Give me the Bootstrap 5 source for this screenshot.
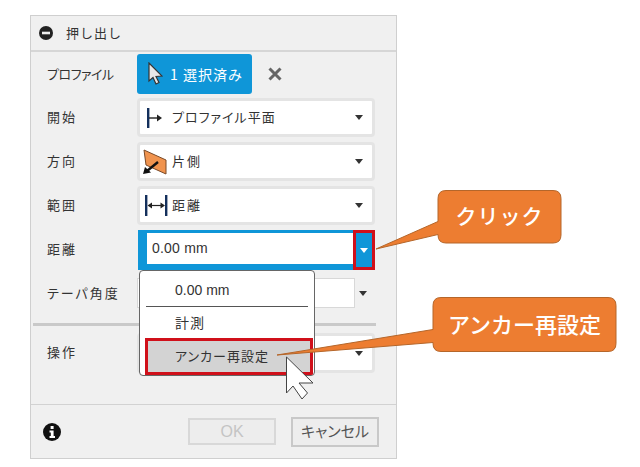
<!DOCTYPE html>
<html lang="ja">
<head>
  <meta charset="UTF-8">
  <meta name="viewport" content="width=device-width, initial-scale=1.0">
  <title>押し出し</title>
  <link href="https://cdn.jsdelivr.net/npm/bootstrap@5.3.0/dist/css/bootstrap.min.css" rel="stylesheet">
  <script src="https://cdn.jsdelivr.net/npm/bootstrap@5.3.0/dist/js/bootstrap.bundle.min.js"></script>
  <style>
    body { background: #fff; font-family: "Noto Sans CJK JP", "Liberation Sans", sans-serif; color: #333; font-size: 13px; position: relative; height: 467px; overflow: hidden; }
    .extrude-panel { margin: 15px 0 0 30px; width: 367px; height: 444px; background: #f0f0f0; border: 1px solid #cfcfcf; }
    .panel-head { height: 36px; border-bottom: 2px solid #d6d6d6; padding-left: 8px; gap: 13px; letter-spacing: 1px; }
    .panel-rows { padding: 2px 21px 0 16px; }
    .field-row { margin-bottom: 5px; height: 39px; }
    .field-label { width: 90px; flex: none; letter-spacing: 2px; font-feature-settings: "palt"; }
    .kana-label { letter-spacing: -.5px; }
    .label-up { margin-bottom: 2px; }
    .chip-row { height: 40px; margin-bottom: 4px; }
    .select-chip { width: 115px; height: 40px; background: #0f96d8; color: #fff; border-radius: 3px; padding-left: 10px; gap: 7px; letter-spacing: 1px; font-size: 14px; }
    .fake-select { flex: 1; height: 39px; background: #fff; border: 3px solid #e4e4e4; border-radius: 4px; padding: 0 9px 0 4px; font-feature-settings: "palt"; letter-spacing: 1px; }
    .fake-select .icon-box { width: 28px; flex: none; }
    .select-text { flex-grow: 1; margin-bottom: 2px; }
    .wide-text { letter-spacing: 2px; }
    .icon-start { margin-left: 3px; }
    .icon-side { margin-left: -1px; }
    .caret-down { width: 0; height: 0; border-left: 4.5px solid transparent; border-right: 4.5px solid transparent; border-top: 5px solid #333; }
    .distance-row { height: 40px; margin-bottom: 8px; }
    .distance-box { flex: 1; height: 40px; margin-left: 1px; background: #0f96d8; padding: 3px 0 6px 9px; font-size: 14px; }
    .distance-input { flex: 1; background: #fff; padding-left: 5px; font-family: "Liberation Sans", sans-serif; letter-spacing: .2px; }
    .distance-btn { width: 22px; margin: -3px 0 -6px 0; border: 3px solid #d0101a; }
    .distance-btn .caret-down { border-top-color: #fff; }
    .taper-row { height: 30px; margin-bottom: 15px; }
    .taper-input { width: 218px; height: 30px; background: #fff; border: 1px solid #d8d8d8; }
    .taper-row .caret-down { margin-left: 4px; }
    .op-row { height: 40px; margin-top: 7px; }
    .panel-rule { height: 3px; margin: 0 20px 0 2px; background: #c9c9c9; }
    .panel-foot { height: 54px; margin-top: auto; border-top: 1px solid #d2d2d2; padding: 0 17px 0 12px; }
    .btn-ok, .btn-cancel { border-radius: 0; font-size: 16px; padding: 0; background: #ededed; }
    .btn-ok, .btn-ok:disabled { width: 88px; height: 27px; margin-right: 15px; border: 2px solid #d8d8d8; background: #ededed; color: #c4c4c4; opacity: 1; font-family: "Liberation Sans", sans-serif; }
    .btn-cancel { width: 88px; height: 30px; border: 2px solid #c8c8c8; color: #555; font-size: 15px; font-feature-settings: "palt"; }
    .anchor-menu { left: 139px; top: 270px; width: 176px; height: 106px; min-width: 0; padding: 0; margin: 0; border: 1px solid #666; border-radius: 4px; font-size: 14px; overflow: hidden; color: #333; }
    .anchor-menu .menu-value { height: 32px; margin: 0 6px; padding: 3px 0 0 29px; border-bottom: 1px solid #555; font-family: "Liberation Sans", sans-serif; line-height: 32px; box-sizing: content-box; }
    .anchor-menu .dropdown-item { padding: 0 0 0 35px; color: #333; }
    .menu-measure { height: 31px; line-height: 30px; letter-spacing: 1px; }
    .anchor-menu .menu-reset { margin: 0 1px 0 5px; width: auto; height: 37px; line-height: 29px; padding-left: 27px; background: #d3d3d3; border: 3px solid #d0101a; font-size: 13px; letter-spacing: 1px; font-feature-settings: "palt"; }
    .callout-art { left: 0; top: 0; z-index: 1001; }
    .callout-text { color: #fff; font-weight: 500; line-height: 1; z-index: 1002; }
    .callout-click { left: 438px; top: 205px; width: 123px; font-size: 21px; letter-spacing: 1px; }
    .callout-anchor { left: 433px; top: 312px; width: 183px; font-size: 22px; }
  </style>
</head>
<body>

<div class="extrude-panel d-flex flex-column">
  <!-- header -->
  <div class="panel-head d-flex align-items-center">
    <svg width="14" height="14" viewBox="0 0 14 14"><circle cx="7" cy="7" r="7" fill="#222"/><rect x="3" y="5.7" width="8" height="2.6" fill="#f0f0f0"/></svg>
    <span>押し出し</span>
  </div>

  <div class="panel-rows">
    <div class="chip-row d-flex align-items-center">
      <div class="field-label kana-label">プロファイル</div>
      <div class="select-chip d-flex align-items-center">
        <svg width="16" height="24" viewBox="0 0 16 24"><path d="M2 1 L2 19 L6 15.5 L9 22 L12 20.5 L9 14.5 L15 14 Z" fill="#e8e8e8" stroke="#333" stroke-width="1.2"/></svg>
        <span>1 選択済み</span>
      </div>
      <svg class="ms-3" width="14" height="14" viewBox="0 0 14 14"><path d="M1.5 1.5 L12.5 12.5 M12.5 1.5 L1.5 12.5" stroke="#666" stroke-width="3"/></svg>
    </div>

    <div class="field-row d-flex align-items-center">
      <div class="field-label label-up">開始</div>
      <div class="fake-select d-flex align-items-center">
        <span class="icon-box">
          <svg class="d-block icon-start" width="20" height="20" viewBox="0 0 20 20"><rect x="0" y="0" width="2.4" height="20" fill="#14305c"/><path d="M2 10 H10" stroke="#222" stroke-width="1.4"/><path d="M10 6.5 L15 10 L10 13.5 Z" fill="#222"/></svg>
        </span>
        <span class="select-text">プロファイル平面</span>
        <span class="caret-down"></span>
      </div>
    </div>

    <div class="field-row d-flex align-items-center">
      <div class="field-label label-up">方向</div>
      <div class="fake-select d-flex align-items-center">
        <span class="icon-box">
          <svg class="d-block icon-side" width="24" height="26" viewBox="0 0 24 26"><path d="M1 1 L23 11 L23 25 L3 16 Z" fill="#f0934e" stroke="#7a4a28" stroke-width="1"/><path d="M15 13 L4 22" stroke="#111" stroke-width="2.4"/><path d="M0 25 L2 18 L8 23.5 Z" fill="#111"/></svg>
        </span>
        <span class="select-text wide-text">片側</span>
        <span class="caret-down"></span>
      </div>
    </div>

    <div class="field-row d-flex align-items-center">
      <div class="field-label label-up">範囲</div>
      <div class="fake-select d-flex align-items-center">
        <span class="icon-box">
          <svg class="d-block" width="24" height="21" viewBox="0 0 24 21"><rect x="1" y="0" width="2.4" height="21" fill="#14305c"/><rect x="21" y="0" width="2.4" height="21" fill="#14305c"/><path d="M6 10.5 H19" stroke="#222" stroke-width="1.2"/><path d="M3.5 10.5 L8 7.5 V13.5 Z M21 10.5 L16.5 7.5 V13.5 Z" fill="#222"/></svg>
        </span>
        <span class="select-text wide-text">距離</span>
        <span class="caret-down"></span>
      </div>
    </div>

    <div class="distance-row d-flex align-items-center">
      <div class="field-label label-up">距離</div>
      <div class="distance-box d-flex">
        <div class="distance-input d-flex align-items-center">0.00 mm</div>
        <div class="distance-btn d-flex align-items-center justify-content-center"><span class="caret-down"></span></div>
      </div>
    </div>

    <div class="taper-row d-flex align-items-center">
      <div class="field-label text-nowrap">テーパ角度</div>
      <div class="taper-input"></div>
      <span class="caret-down"></span>
    </div>
  </div>

  <div class="panel-rule"></div>

  <div class="panel-rows pt-0">
    <div class="op-row d-flex align-items-center">
      <div class="field-label label-up">操作</div>
      <div class="fake-select d-flex align-items-center justify-content-end h-100"><span class="caret-down"></span></div>
    </div>
  </div>

  <!-- footer -->
  <div class="panel-foot d-flex align-items-center">
    <svg width="18" height="18" viewBox="0 0 18 18"><circle cx="9" cy="9" r="9" fill="#111"/><rect x="7.6" y="3" width="3" height="3" fill="#fff"/><path d="M6.5 7.5 H10.6 V13 H12 V15 H6.5 V13 H7.8 V9.5 H6.5 Z" fill="#fff"/></svg>
    <button type="button" class="btn btn-ok ms-auto" disabled>OK</button>
    <button type="button" class="btn btn-cancel">キャンセル</button>
  </div>
</div>

<!-- open menu -->
<div class="dropdown-menu show position-absolute anchor-menu">
  <div class="menu-value">0.00 mm</div>
  <div class="dropdown-item menu-measure">計測</div>
  <div class="dropdown-item menu-reset">アンカー再設定</div>
</div>

<!-- callouts and pointer -->
<svg class="position-absolute callout-art" width="640" height="467" viewBox="0 0 640 467">
  <path d="M446 190.5 H553 Q561 190.5 561 198.5 V235 Q561 243 553 243 H446 Q438 243 438 235 V234.5 L376 249 L438 221.5 V198.5 Q438 190.5 446 190.5 Z" fill="#ed7d31" stroke="#b5662a"/>
  <path d="M441 297.5 H608 Q616 297.5 616 305.5 V343.5 Q616 351.5 608 351.5 H441 Q433 351.5 433 343.5 V342.5 L277 355 L433 329.5 V305.5 Q433 297.5 441 297.5 Z" fill="#ed7d31" stroke="#b5662a"/>
  <path d="M286.5 357 V393 L293 386 L302 399 L307.5 393 L299 383 L313 383 Z" fill="#fff" stroke="#444" stroke-width="1"/>
</svg>
<div class="position-absolute callout-text callout-click text-center">クリック</div>
<div class="position-absolute callout-text callout-anchor text-center">アンカー再設定</div>

</body>
</html>
